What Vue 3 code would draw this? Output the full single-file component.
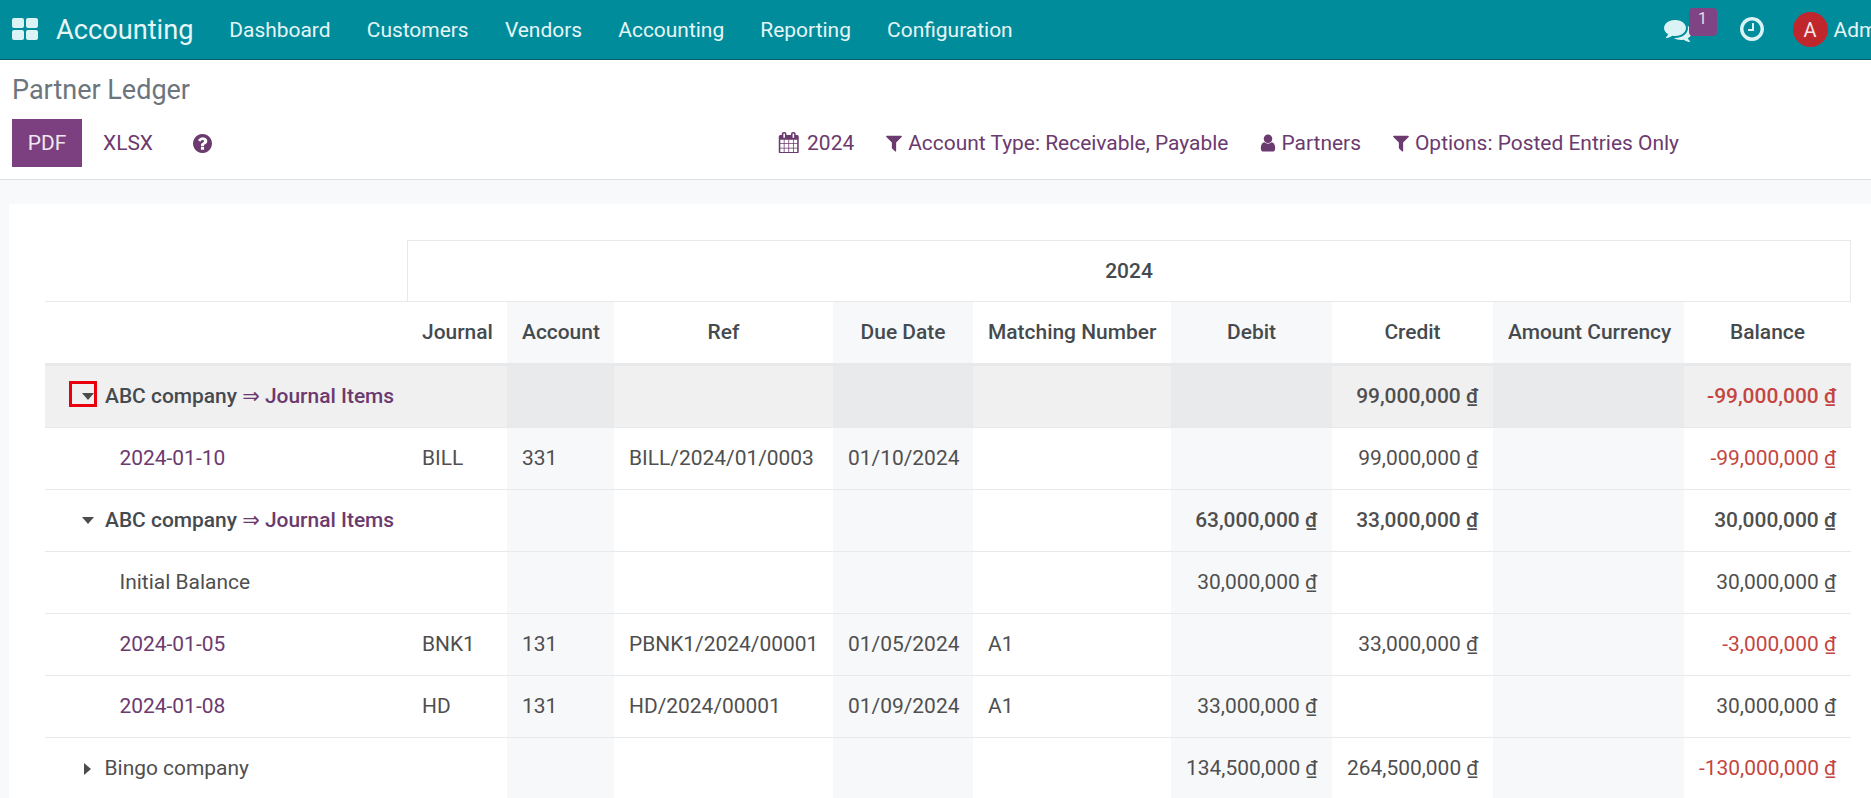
<script setup>
const nav = ['Dashboard', 'Customers', 'Vendors', 'Accounting', 'Reporting', 'Configuration']
const P = {
  comments: 'M1408 768q0 139-94 257t-256.5 186.5-353.5 68.5q-86 0-176-16-124 88-278 128-36 9-86 16h-3q-11 0-20.5-8t-11.5-21q-1-3-1-6.5t.5-6.5 2-6l2.5-5 3.5-5.5 4-5 4.5-5 4-4.5q5-6 23-25t26-29.5 22.5-29 25-38.5 20.5-44q-124-72-195-177t-71-224q0-139 94-257t256.5-186.5 353.5-68.5 353.5 68.5 256.5 186.5 94 257zm384 256q0 120-71 224.5t-195 176.5q10 24 20.5 44t25 38.5 22.5 29 26 29.5 23 25q1 1 4 4.5t4.5 5 4 5 3.5 5.5l2.5 5 2 6 .5 6.5-1 6.5q-3 14-13 22t-22 7q-50-7-86-16-154-40-278-128-90 16-176 16-271 0-472-132 58 4 88 4 161 0 309-45t264-129q125-92 192-212t67-254q0-77-23-152 129 71 204 178t75 230z',
  clock: 'M1024 544v448q0 14-9 23t-23 9h-320q-14 0-23-9t-9-23v-64q0-14 9-23t23-9h224v-352q0-14 9-23t23-9h64q14 0 23 9t9 23zm416 352q0-148-73-273t-198-198-273-73-273 73-198 198-73 273 73 273 198 198 273 73 273-73 198-198 73-273zm224 0q0 209-103 385.5t-279.5 279.5-385.5 103-385.5-103-279.5-279.5-103-385.5 103-385.5 279.5-279.5 385.5-103 385.5 103 279.5 279.5 103 385.5z',
  question: 'M1024 1376v-192q0-14-9-23t-23-9h-192q-14 0-23 9t-9 23v192q0 14 9 23t23 9h192q14 0 23-9t9-23zm256-672q0-88-55.5-163t-138.5-116-170-41q-243 0-371 213-15 24 8 42l132 100q7 6 19 6 16 0 25-12 53-68 86-92 34-24 86-24 48 0 85.5 26t37.5 59q0 38-20 61t-68 45q-63 28-115.5 86.5t-52.5 125.5v36q0 14 9 23t23 9h192q14 0 23-9t9-23q0-19 21.5-49.5t54.5-49.5q32-18 49-28.5t46-35 44.5-48 28-60.5 12.5-81zm384 192q0 209-103 385.5t-279.5 279.5-385.5 103-385.5-103-279.5-279.5-103-385.5 103-385.5 279.5-279.5 385.5-103 385.5 103 279.5 279.5 103 385.5z',
  calendar: 'M192 1664h288v-288h-288v288zm352 0h320v-288h-320v288zm-352-352h288v-320h-288v320zm352 0h320v-320h-320v320zm-352-384h288v-288h-288v288zm736 736h320v-288h-320v288zm-384-736h320v-288h-320v288zm768 736h288v-288h-288v288zm-384-352h320v-320h-320v320zm-352-864v-288q0-13-9.5-22.5t-22.5-9.5h-64q-13 0-22.5 9.5t-9.5 22.5v288q0 13 9.5 22.5t22.5 9.5h64q13 0 22.5-9.5t9.5-22.5zm736 864h288v-320h-288v320zm-384-384h320v-288h-320v288zm384 0h288v-288h-288v288zm32-480v-288q0-13-9.5-22.5t-22.5-9.5h-64q-13 0-22.5 9.5t-9.5 22.5v288q0 13 9.5 22.5t22.5 9.5h64q13 0 22.5-9.5t9.5-22.5zm384-64v1280q0 52-38 90t-90 38h-1408q-52 0-90-38t-38-90v-1280q0-52 38-90t90-38h128v-96q0-66 47-113t113-47h64q66 0 113 47t47 113v96h384v-96q0-66 47-113t113-47h64q66 0 113 47t47 113v96h128q52 0 90 38t38 90z',
  filter: 'M1595 295q17 41-14 70l-493 493v742q0 42-39 59-13 5-25 5-27 0-45-19l-256-256q-19-19-19-45v-486l-493-493q-31-29-14-70 17-39 59-39h1280q42 0 59 39z',
  user: 'M1536 1399q0 109-62.5 187t-150.5 78h-854q-88 0-150.5-78t-62.5-187q0-85 8.5-160.5t31.5-152 58.5-131 94-89 134.5-34.5q131 128 313 128t313-128q76 0 134.5 34.5t94 89 58.5 131 31.5 152 8.5 160.5zm-256-887q0 159-112.5 271.5t-271.5 112.5-271.5-112.5-112.5-271.5 112.5-271.5 271.5-112.5 271.5 112.5 112.5 271.5z',
}
const filters = [
  { icon: 'calendar', text: '2024', cls: 'f-year' },
  { icon: 'filter', text: 'Account Type: Receivable, Payable', cls: '' },
  { icon: 'user', text: 'Partners', cls: 'f-user' },
  { icon: 'filter', text: 'Options: Posted Entries Only', cls: '' },
]
const cols = [
  { w: 362, label: '' },
  { w: 100, label: 'Journal' },
  { w: 107, label: 'Account', sh: true },
  { w: 219, label: 'Ref' },
  { w: 140, label: 'Due Date', sh: true },
  { w: 198, label: 'Matching Number' },
  { w: 161, label: 'Debit', sh: true },
  { w: 161, label: 'Credit' },
  { w: 191, label: 'Amount Currency', sh: true },
  { w: 167, label: 'Balance' },
]
const rows = [
  { kind: 'group open hl', name: 'ABC company', link: true, credit: '99,000,000 ₫', balance: '-99,000,000 ₫', neg: true, marked: true },
  { kind: 'line', date: '2024-01-10', journal: 'BILL', account: '331', ref: 'BILL/2024/01/0003', due: '01/10/2024', credit: '99,000,000 ₫', balance: '-99,000,000 ₫', neg: true },
  { kind: 'group open', name: 'ABC company', link: true, debit: '63,000,000 ₫', credit: '33,000,000 ₫', balance: '30,000,000 ₫' },
  { kind: 'line', plain: 'Initial Balance', debit: '30,000,000 ₫', balance: '30,000,000 ₫' },
  { kind: 'line', date: '2024-01-05', journal: 'BNK1', account: '131', ref: 'PBNK1/2024/00001', due: '01/05/2024', match: 'A1', credit: '33,000,000 ₫', balance: '-3,000,000 ₫', neg: true },
  { kind: 'line', date: '2024-01-08', journal: 'HD', account: '131', ref: 'HD/2024/00001', due: '01/09/2024', match: 'A1', debit: '33,000,000 ₫', balance: '30,000,000 ₫' },
  { kind: 'closed', name: 'Bingo company', debit: '134,500,000 ₫', credit: '264,500,000 ₫', balance: '-130,000,000 ₫', neg: true },
]
</script>

<template>
  <div class="page">
    <header class="nav">
      <svg class="apps" viewBox="0 0 26 22" aria-hidden="true">
        <rect x="0" y="0" width="12" height="10" rx="2" />
        <rect x="14" y="0" width="12" height="10" rx="2" />
        <rect x="0" y="12" width="12" height="10" rx="2" />
        <rect x="14" y="12" width="12" height="10" rx="2" />
      </svg>
      <span class="brand">Accounting</span>
      <nav class="menu">
        <a v-for="n in nav" :key="n">{{ n }}</a>
      </nav>
      <div class="nav-right">
        <span class="chat">
          <svg class="ic-comments" viewBox="0 0 1792 1792"><path :d="P.comments" /></svg>
          <span class="badge">1</span>
        </span>
        <svg class="ic-clock" viewBox="128 128 1536 1536"><path :d="P.clock" /></svg>
        <span class="avatar">A</span>
        <span class="uname">Admin</span>
      </div>
    </header>

    <section class="cp">
      <h1 class="title">Partner Ledger</h1>
      <div class="cp-row">
        <button class="btn-pdf">PDF</button>
        <button class="btn-xlsx">XLSX</button>
        <svg class="ic-help" viewBox="128 128 1536 1536"><path :d="P.question" /></svg>
        <div class="filters">
          <span v-for="f in filters" :key="f.text" class="filter" :class="f.cls">
            <svg class="fi" viewBox="0 0 1792 1792"><path :d="P[f.icon]" /></svg>
            <span>{{ f.text }}</span>
          </span>
        </div>
      </div>
    </section>

    <main class="content">
      <div class="card">
        <table class="ledger">
          <colgroup>
            <col v-for="(c, i) in cols" :key="i" :style="{ width: c.w + 'px' }" />
          </colgroup>
          <thead>
            <tr class="h1">
              <th></th>
              <th colspan="9" class="year">2024</th>
            </tr>
            <tr class="h2">
              <th v-for="(c, i) in cols" :key="i" :class="{ sh: c.sh }">{{ c.label }}</th>
            </tr>
          </thead>
          <tbody>
            <tr v-for="(r, idx) in rows" :key="idx" :class="r.kind">
              <td class="name">
                <template v-if="r.name">
                  <span class="caret" :class="r.kind.includes('open') ? 'down' : 'right'"></span>
                  <span>{{ r.name }}</span>
                  <span v-if="r.link" class="lnk"> ⇒ Journal Items</span>
                  <span v-if="r.marked" class="mark"></span>
                </template>
                <span v-else-if="r.date" class="date">{{ r.date }}</span>
                <span v-else class="indent">{{ r.plain }}</span>
              </td>
              <td>{{ r.journal }}</td>
              <td class="sh">{{ r.account }}</td>
              <td>{{ r.ref }}</td>
              <td class="sh">{{ r.due }}</td>
              <td>{{ r.match }}</td>
              <td class="sh r">{{ r.debit }}</td>
              <td class="r">{{ r.credit }}</td>
              <td class="sh"></td>
              <td class="r" :class="{ neg: r.neg }">{{ r.balance }}</td>
            </tr>
          </tbody>
        </table>
      </div>
    </main>
  </div>
</template>

<style>
html, body { margin: 0; height: 798px; overflow: hidden; background: #f8f9fa; }
</style>

<style scoped>
.page { font-family: Roboto, "Liberation Sans", "DejaVu Sans", sans-serif; font-size: 20.95px; color: #4f4f4f; width: 1871px; height: 798px; overflow: hidden; background: #f8f9fa; }

.nav { height: 60px; box-sizing: border-box; background: #018c9c; border-bottom: 1px solid #00606b; display: flex; align-items: center; color: #dff4f6; overflow: hidden; padding-left: 12px; }
.apps { width: 26px; height: 22px; fill: #dbf3f5; flex: none; margin-top: -1px; }
.brand { font-size: 27.2px; margin-left: 18px; color: #e6f6f7; }
.menu { display: flex; gap: 36.2px; margin-left: 35.8px; }
.menu a { color: #e6f6f7; }
.nav-right { margin-left: auto; margin-right: -23px; display: flex; align-items: center; flex: none; }
.chat { position: relative; display: block; width: 28px; height: 28px; margin-right: 48px; }
.ic-comments { width: 28px; height: 28px; fill: #dbf3f5; display: block; }
.badge { position: absolute; left: 25px; top: -8px; width: 28px; height: 28px; border-radius: 4px; background: #7f4484; color: #e8dcea; font-size: 16px; line-height: 22px; text-align: center; }
.ic-clock { width: 24px; height: 24px; fill: #dbf3f5; flex: none; margin-top: -1px; }
.avatar { width: 35px; height: 35px; border-radius: 50%; background: #c0272d; color: #f7e6e6; display: flex; align-items: center; justify-content: center; font-size: 20px; margin-left: 29px; }
.uname { margin-left: 6px; color: #e6f6f7; }

.cp { height: 120px; box-sizing: border-box; background: #fff; border-bottom: 1px solid #dee2e6; padding: 0 12px; }
.title { margin: 0; font-weight: 400; font-size: 27px; line-height: 59px; height: 59px; padding-top: 1px; box-sizing: border-box; color: #6c757d; }
.cp-row { display: flex; align-items: center; height: 48px; }
.btn-pdf { width: 70px; height: 48px; border: 0; background: #7c4080; color: #f1e8f1; font: inherit; padding: 0; }
.btn-xlsx { border: 0; background: none; color: #6b3a6e; font: inherit; padding: 0; margin-left: 21px; }
.ic-help { width: 19px; height: 19px; fill: #6b3a6e; margin-left: 40px; flex: none; }
.filters { display: flex; align-items: center; gap: 30px; margin-left: auto; margin-right: 180px; color: #6b3a6e; }
.filter { display: flex; align-items: center; gap: 4px; }
.f-year { gap: 7.5px; }
.f-year .fi { width: 21.5px; height: 21.5px; margin-top: -1px; }
.f-user { gap: 3px; }
.fi { width: 20px; height: 20px; fill: #6b3a6e; flex: none; }

.content { padding: 24px 0 0 9px; background: #f8f9fa; }
.card { background: #fff; padding: 36px 0 0 36px; height: 700px; }
.ledger { border-collapse: separate; border-spacing: 0; table-layout: fixed; width: 1806px; }
.ledger th, .ledger td { padding: 0 15px; white-space: nowrap; box-sizing: border-box; border-bottom: 1px solid #e7e9eb; overflow: visible; }
.ledger th { font-weight: 500; color: #454a4f; }
.h1 th { height: 62px; padding-bottom: 1px; }
.year { border: 1px solid #e7e9eb; text-align: center; }
.h2 th { height: 64px; padding-bottom: 1px; border-bottom: 3px solid #e7e9eb; text-align: center; }
.h2 th.sh, td.sh { background: #f7f8fa; }
.ledger td { height: 62px; padding-bottom: 2px; font-weight: 400; }
td.r { text-align: right; }
.group td, .hl td { font-weight: 500; }
.hl td { background: #f0f0f1; }
.hl td.sh { background: #e9eaec; }
.name { position: relative; padding-left: 0 !important; overflow: visible; }
.group .name { color: #454a4f; }
.caret { display: inline-block; width: 0; height: 0; vertical-align: middle; }
.caret.down { border-left: 6px solid transparent; border-right: 6px solid transparent; border-top: 7px solid #4c4c4c; margin-left: 36.5px; margin-right: 11.5px; }
.caret.right { border-top: 6px solid transparent; border-bottom: 6px solid transparent; border-left: 7px solid #4c4c4c; margin-left: 39px; margin-right: 13.5px; }
.lnk { color: #6b3a6e; }
.mark { position: absolute; left: 24px; top: 15px; width: 28px; height: 26px; box-sizing: border-box; border: 3px solid #e8000d; pointer-events: none; }
.date { margin-left: 74.5px; color: #6b3a6e; }
.indent { margin-left: 74.5px; }
.neg { color: #c4453f; }
</style>
